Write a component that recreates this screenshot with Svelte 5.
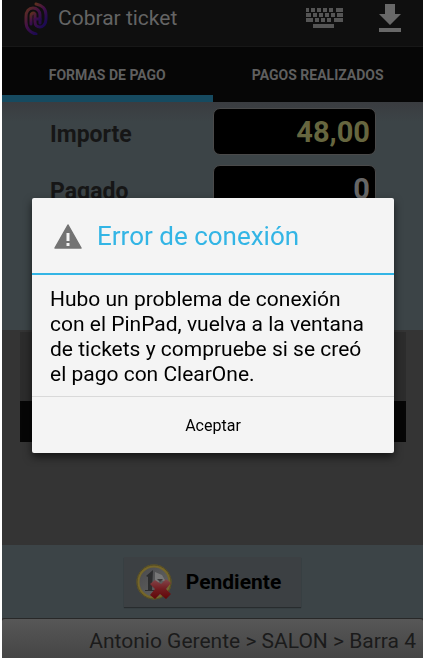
<script lang="ts">
  let activeTab = $state(0);
  let open = $state(true);

  const tabs = ['Formas de pago', 'Pagos realizados'];
  const amounts = [
    { id: 'importe', label: 'Importe', value: '48,00', due: true },
    { id: 'pagado', label: 'Pagado', value: '0', due: false }
  ];

  // key rows of the keyboard icon: [x, width]
  const keyRows = [
    [[0, 3], [5, 4], [11, 4], [17, 4], [23, 4], [30, 7]],
    [[0, 5], [7, 4], [13, 4], [19, 4], [25, 4], [31, 6]],
    [[0, 7], [9, 4], [15, 4], [21, 4], [28, 9]]
  ];
</script>

<div class="screen">
  <header class="bar">
    <svg class="logo" width="24" height="34" viewBox="0 0 24 34" aria-hidden="true">
      <defs>
        <linearGradient id="brand" x1="0" y1="0" x2="0.7" y2="1">
          <stop offset="0" stop-color="#5f301d" />
          <stop offset="0.5" stop-color="#431047" />
          <stop offset="1" stop-color="#1c0a52" />
        </linearGradient>
      </defs>
      <g fill="none" stroke="url(#brand)" stroke-width="3" stroke-linecap="round">
        <path d="M12 3C18 4 22 8 22 14v4c0 5-3 8-6 8-3 0-5-2-5-5v-8" />
        <path d="M12 33C6 32 2 27 2 21v-5c0-6 3-9 7-9s7 3 7 7v8" />
        <path d="M7 23V15c0-2 1-3 3-3M11 18h5" />
      </g>
    </svg>
    <h1>Cobrar ticket</h1>
    <button class="icon-btn" aria-label="Teclado">
      <svg width="37" height="20" viewBox="0 0 37 20" fill="#555">
        {#each keyRows as row, i}
          {#each row as [x, w]}
            <rect {x} y={i * 5} width={w} height="4" />
          {/each}
        {/each}
        <rect x="7" y="16" width="21" height="4" />
      </svg>
    </button>
    <button class="icon-btn" aria-label="Descargar">
      <svg width="22" height="28" viewBox="0 0 22 28" fill="#686868">
        <path d="M6 0h10v10h6L11 21 0 10h6zM0 24h22v4H0z" />
      </svg>
    </button>
  </header>

  <nav class="tabs">
    {#each tabs as tab, i}
      <button class:active={activeTab === i} onclick={() => (activeTab = i)}>{tab}</button>
    {/each}
  </nav>

  <main>
    <section class="amounts">
      {#each amounts as amount}
        <label for={amount.id}>{amount.label}</label>
        <input id={amount.id} class:due={amount.due} value={amount.value} readonly />
      {/each}
    </section>
    <section class="payments">
      <div class="list"></div>
      <div class="total"></div>
    </section>
    <section class="actions">
      <button class="pending">
        <svg width="38" height="38" viewBox="0 0 38 38" aria-hidden="true">
          <defs>
            <linearGradient id="coin" x1="0" y1="0" x2="1" y2="1">
              <stop offset="0" stop-color="#48494b" />
              <stop offset="1" stop-color="#666" />
            </linearGradient>
            <linearGradient id="cross" x1="0" y1="0" x2="0" y2="1">
              <stop offset="0" stop-color="#84484c" />
              <stop offset="0.5" stop-color="#711c20" />
              <stop offset="1" stop-color="#610609" />
            </linearGradient>
          </defs>
          <circle cx="18" cy="19" r="16" fill="url(#coin)" stroke="#75662a" stroke-width="3" />
          <circle cx="18" cy="19" r="17" fill="none" stroke="#514923" />
          <path d="M10 13l7-6-1 20h2v1H9v-1h3V14z" fill="#2c2d2e" />
          <path d="M19 9l7 3 4 7-5-2-6 7z" fill="#777" />
          <path d="M21 16h6l-3 3z" fill="#3a3a3a" />
          <path d="M14 21l5-4 6 4 5-5 5 4-5 6 5 5-5 5-6-5-5 5-5-4 5-6z" fill="url(#cross)" />
        </svg>
        Pendiente
      </button>
    </section>
  </main>

  <footer>Antonio Gerente &gt; SALON &gt; Barra 4</footer>
</div>

{#if open}
  <div class="overlay">
    <div class="dialog" role="alertdialog" aria-modal="true" aria-labelledby="dialog-title" aria-describedby="dialog-text">
      <div class="dialog-header">
        <svg width="28" height="25" viewBox="0 0 28 25" aria-hidden="true">
          <path d="M14 1L27 24H1z" fill="#737373" stroke="#737373" stroke-width="1.5" stroke-linejoin="round" />
          <path d="M12.5 9h3v8h-3zM12.5 19h3v3h-3z" fill="#f4f4f4" />
        </svg>
        <h2 id="dialog-title">Error de conexión</h2>
      </div>
      <p id="dialog-text">
        Hubo un problema de conexión con el PinPad, vuelva a la ventana de tickets y compruebe si se creó el pago con
        ClearOne.
      </p>
      <button class="accept" onclick={() => (open = false)}>Aceptar</button>
    </div>
  </div>
{/if}

<style>
  :global(body) {
    background: #fff;
    font-family: Roboto, 'Liberation Sans', sans-serif;
  }

  button,
  input {
    font-family: inherit;
    border: none;
    box-sizing: border-box;
  }

  h1,
  h2,
  p {
    margin: 0;
    font-weight: 400;
  }

  .screen {
    display: flex;
    flex-direction: column;
    min-height: 100vh;
    margin: 0 3px 0 2px;
    background: #343434;
  }

  .bar {
    display: flex;
    align-items: center;
    box-sizing: border-box;
    height: 47px;
    padding: 0 22px 10px;
    background: #0f0f0f;
    border-bottom: 1px solid #171717;
  }

  .logo {
    margin-right: 10px;
  }

  h1 {
    flex: 1;
    font-size: 21px;
    color: #646464;
  }

  .icon-btn {
    display: flex;
    padding: 0;
    margin-left: 36px;
    background: none;
  }

  .tabs {
    display: flex;
    height: 55px;
    background: #060606;
  }

  .tabs button {
    flex: 1;
    padding: 7px 0 0;
    background: none;
    border-bottom: 7px solid transparent;
    color: #5f5f5f;
    font-size: 14px;
    font-weight: 700;
    text-transform: uppercase;
  }

  .tabs .active {
    border-color: #164a60;
  }

  main {
    flex: 1;
    display: flex;
    flex-direction: column;
  }

  .amounts {
    display: grid;
    grid-template-columns: 163px 163px;
    grid-auto-rows: 47px;
    gap: 10px 0;
    align-content: start;
    box-sizing: border-box;
    height: 228px;
    padding: 6px 0 0 48px;
    background: linear-gradient(#3a3c40, #3c4447 20px);
  }

  label {
    align-self: center;
    padding-top: 6px;
    color: #161616;
    font-size: 23px;
    font-weight: 700;
  }

  input {
    width: 100%;
    padding: 0 5px;
    background: #000;
    border: 1px solid #4a4a4a;
    border-radius: 7px;
    color: #666;
    font-size: 29px;
    font-weight: 700;
    text-align: right;
  }

  .due {
    color: #66663f;
  }

  .payments {
    flex: 1;
    padding: 2px 17px 0 18px;
  }

  .list {
    height: 69px;
    background: #2c2c2c;
  }

  .total {
    height: 41px;
    background: #060606;
  }

  .actions {
    display: flex;
    justify-content: center;
    padding: 12px 0 11px;
    background: #3c4447;
  }

  .pending {
    display: flex;
    align-items: center;
    gap: 12px;
    height: 50px;
    padding: 0 20px 0 12px;
    background: #3c4043;
    box-shadow: 0 1px 1px #282c2e;
    color: #000;
    font-size: 21px;
    font-weight: 700;
  }

  footer {
    box-sizing: border-box;
    height: 40px;
    padding: 3px 7px 0;
    background: linear-gradient(#575757, #454545);
    border-top: 1px solid #282828;
    border-radius: 3px 3px 0 0;
    color: #1b1b1b;
    font-size: 21px;
    line-height: 38px;
    text-align: right;
  }

  .overlay {
    position: fixed;
    inset: 0;
    display: flex;
    align-items: center;
    padding: 0 32px 8px;
  }

  .dialog {
    flex: 1;
    background: #f4f4f4;
    border-radius: 2px;
    box-shadow: 0 4px 8px rgba(0, 0, 0, 0.6);
  }

  .dialog-header {
    display: flex;
    align-items: center;
    gap: 15px;
    box-sizing: border-box;
    height: 77px;
    padding: 2px 22px 0;
    border-bottom: 2px solid #33b5e5;
  }

  h2 {
    color: #33b5e5;
    font-size: 26px;
  }

  .dialog p {
    padding: 12px 18px 9px;
    color: #000;
    font-size: 21px;
    line-height: 25px;
  }

  .accept {
    width: 100%;
    height: 57px;
    padding: 2px 0 0;
    background: none;
    border-top: 1px solid #d9d9d9;
    color: #000;
    font-size: 16px;
  }
</style>
